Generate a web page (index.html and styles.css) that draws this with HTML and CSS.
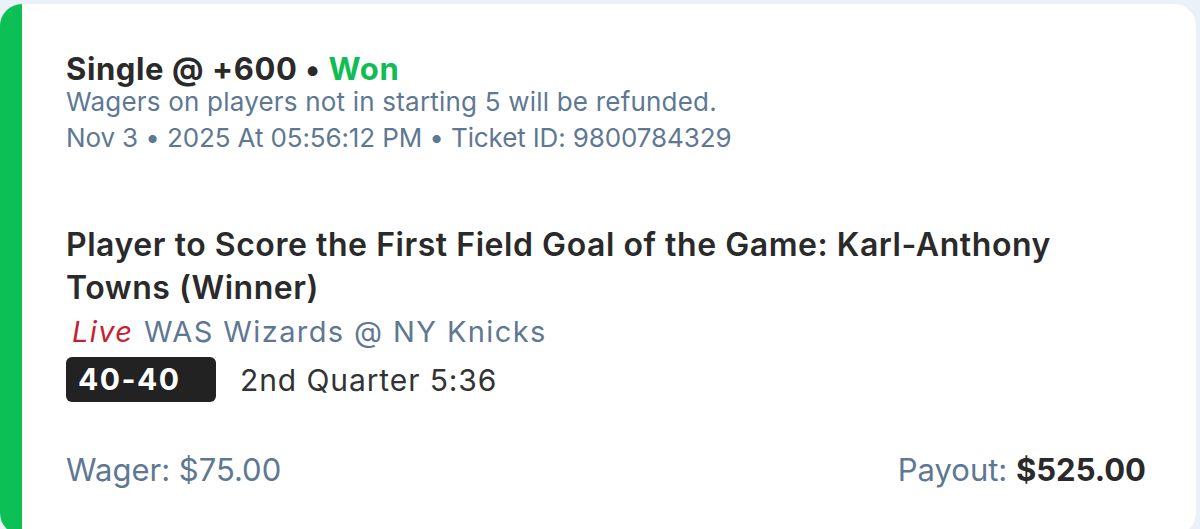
FILE: index.html
```html
<!DOCTYPE html>
<html>
<head>
<meta charset="utf-8">
<link rel="stylesheet" href="styles.css">
</head>
<body>
<div class="card">
  <div class="title">Single @ +600 • <span class="won">Won</span></div>
  <div class="sub">Wagers on players not in starting 5 will be refunded.</div>
  <div class="sub sub-meta">Nov 3 • 2025 At 05:56:12 PM • Ticket ID: 9800784329</div>
  <div class="market">Player to Score the First Field Goal of the Game: Karl-Anthony Towns (Winner)</div>
  <div class="game"><span class="live">Live</span> WAS Wizards @ NY Knicks</div>
  <div class="score-row">
    <span class="badge">40-40</span>
    <span class="period">2nd Quarter 5:36</span>
  </div>
  <div class="footer">
    <span class="wager">Wager: $75.00</span>
    <span class="payout">Payout: <b>$525.00</b></span>
  </div>
</div>
</body>
</html>
```

FILE: styles.css
```css
html, body {
  margin: 0;
  padding: 0;
}
body {
  background: #eaf1f8;
  width: 1200px;
  height: 529px;
  overflow: hidden;
  font-family: "Inter", "Liberation Sans", sans-serif;
}
.card {
  margin: 4px 4px 0 0;
  height: 531px;
  box-sizing: border-box;
  background: #ffffff;
  border-left: 22px solid #0cc055;
  border-radius: 22px;
  padding: 50px 50px 0 44px;
}
.title {
  font-size: 31px;
  font-weight: 700;
  line-height: 30px;
  color: #2a2a2a;
  letter-spacing: 0.6px;
}
.won {
  color: #10bd54;
}
.sub {
  font-size: 26px;
  line-height: 36px;
  color: #5e7893;
  letter-spacing: 0.2px;
}
.sub-meta {
  letter-spacing: -0.12px;
}
.market {
  margin-top: 67px;
  font-size: 32px;
  font-weight: 600;
  line-height: 43px;
  color: #2a2a2a;
  max-width: 1020px;
  letter-spacing: 0.55px;
}
.game {
  font-size: 29px;
  line-height: 45px;
  color: #5e7893;
  letter-spacing: 1.4px;
}
.live {
  color: #c8202e;
  font-style: italic;
  margin-left: 6px;
  margin-right: 1px;
}
.score-row {
  margin-top: 3px;
  display: flex;
  align-items: center;
  gap: 24px;
  height: 45px;
}
.badge {
  box-sizing: border-box;
  width: 150px;
  height: 45px;
  background: #222222;
  color: #ffffff;
  border-radius: 6px;
  font-size: 30px;
  font-weight: 700;
  line-height: 45px;
  padding-left: 12px;
  letter-spacing: 1.5px;
}
.period {
  font-size: 30px;
  color: #333333;
  letter-spacing: 0.9px;
}
.footer {
  margin-top: 48px;
  display: flex;
  justify-content: space-between;
  font-size: 31px;
  line-height: 40px;
  color: #5e7893;
}
.payout b {
  color: #2a2a2a;
  font-weight: 700;
}
```
